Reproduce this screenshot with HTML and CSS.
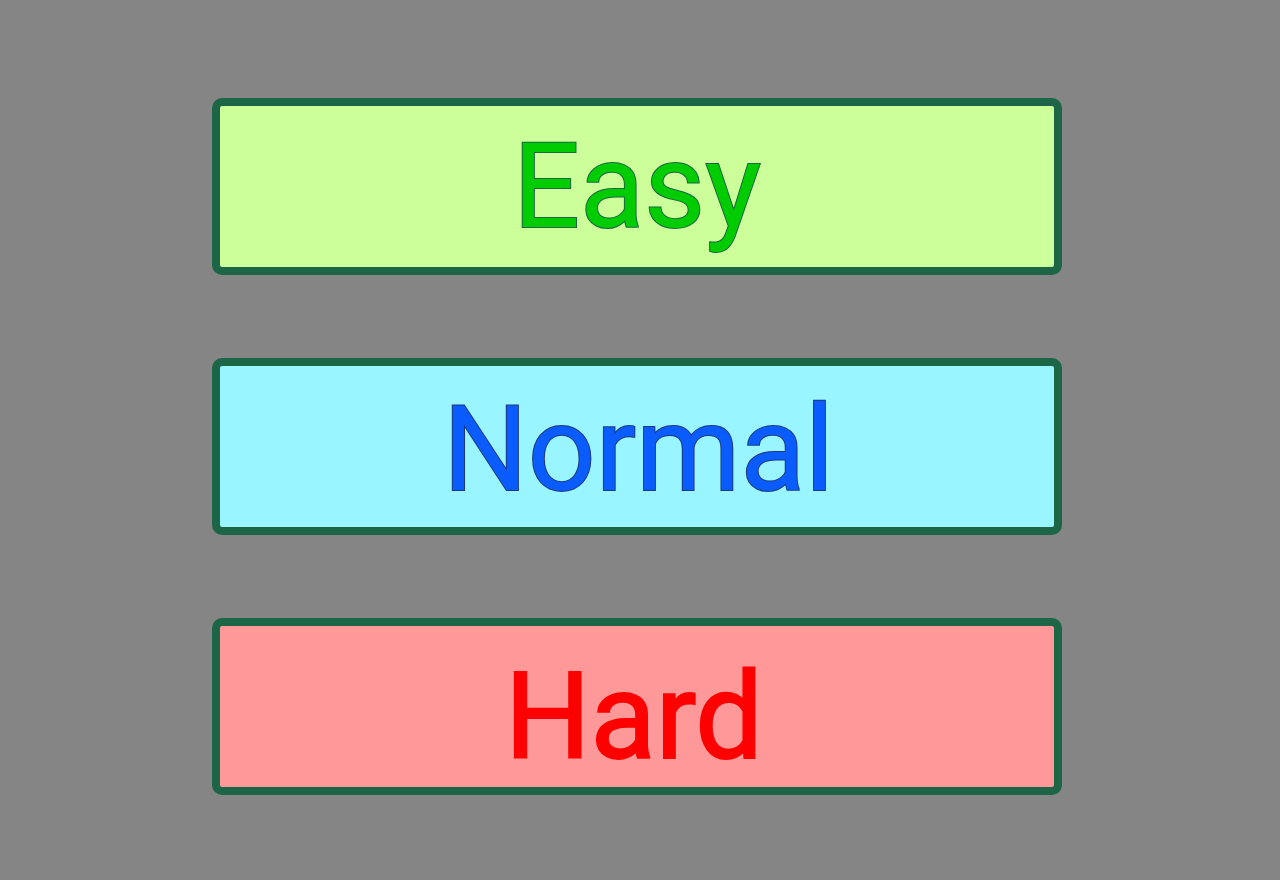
FILE: index.html
```html
<!DOCTYPE html>
<html>
<head>
<meta charset="utf-8">
<link rel="stylesheet" href="styles.css">
</head>
<body>
<main class="menu">
  <button class="level easy">Easy</button>
  <button class="level normal">Normal</button>
  <button class="level hard">Hard</button>
</main>
</body>
</html>
```
FILE: styles.css
```css
html, body {
  margin: 0;
  padding: 0;
  background: #858585;
  width: 1280px;
  height: 880px;
  overflow: hidden;
}
.menu {
  display: flex;
  flex-direction: column;
  gap: 83px;
  padding: 98px 0 0 212px;
}
.level {
  box-sizing: border-box;
  width: 850px;
  height: 177px;
  border: 8px solid #1c6546;
  border-radius: 10px;
  display: flex;
  align-items: center;
  justify-content: center;
  margin: 0;
  padding: 0;
  font-family: Roboto, "Noto Sans", sans-serif;
  font-weight: 400;
  line-height: 1;
  -webkit-text-stroke: 2px;
  paint-order: stroke fill;
}
.easy {
  font-size: 118px;
  background: #ccff99;
  color: #00cc00;
  -webkit-text-stroke-color: #1c6546;
}
.normal {
  font-size: 119px;
  padding: 6px 0 0 3px;
  background: #99f5ff;
  color: #0a5cff;
  -webkit-text-stroke-color: #1c3a7a;
}
.hard {
  font-size: 120px;
  padding: 21px 6px 0 0;
  background: #ff9999;
  color: #ff0000;
  -webkit-text-stroke-color: #ff0000;
}
```
